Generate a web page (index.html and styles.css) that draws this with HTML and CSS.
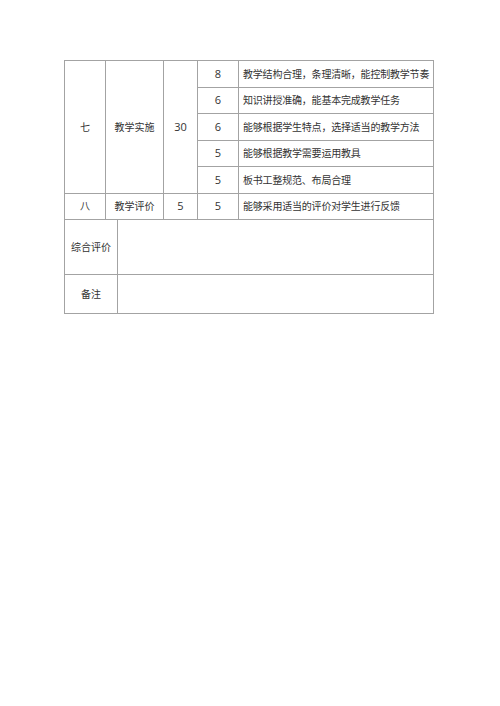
FILE: index.html
```html
<!DOCTYPE html>
<html lang="zh">
<head>
<meta charset="utf-8">
<link rel="stylesheet" href="styles.css">
</head>
<body>
<table class="grid">
  <colgroup>
    <col class="c1"><col class="c2"><col class="c3"><col class="c4"><col class="c5"><col class="c6">
  </colgroup>
  <tr class="r">
    <td rowspan="5" class="ctr">七</td>
    <td rowspan="5" colspan="2" class="ctr">教学实施</td>
    <td rowspan="5" class="ctr num">30</td>
    <td class="ctr num">8</td>
    <td class="desc">教学结构合理，条理清晰，能控制教学节奏</td>
  </tr>
  <tr class="r"><td class="ctr num">6</td><td class="desc">知识讲授准确，能基本完成教学任务</td></tr>
  <tr class="r"><td class="ctr num">6</td><td class="desc">能够根据学生特点，选择适当的教学方法</td></tr>
  <tr class="r"><td class="ctr num">5</td><td class="desc">能够根据教学需要运用教具</td></tr>
  <tr class="r"><td class="ctr num">5</td><td class="desc">板书工整规范、布局合理</td></tr>
  <tr class="r">
    <td class="ctr">八</td>
    <td colspan="2" class="ctr">教学评价</td>
    <td class="ctr num">5</td>
    <td class="ctr num">5</td>
    <td class="desc">能够采用适当的评价对学生进行反馈</td>
  </tr>
  <tr class="big">
    <td colspan="2" class="ctr">综合评价</td>
    <td colspan="4"></td>
  </tr>
  <tr class="mid">
    <td colspan="2" class="ctr">备注</td>
    <td colspan="4"></td>
  </tr>
</table>
</body>
</html>
```
FILE: styles.css
```css
html, body {
  margin: 0;
  padding: 0;
  background: #fff;
}
body {
  padding: 60px 0 0 64px;
  font-family: "Noto Sans CJK SC", "Open Sans", sans-serif;
  color: #333;
  font-size: 10px;
}
.grid {
  border-collapse: collapse;
  table-layout: fixed;
  width: 370px;
}
.grid td {
  border: 1px solid #a3a3a3;
  padding: 0;
  line-height: 14px;
  white-space: nowrap;
  overflow: hidden;
}
.c1 { width: 41px; }
.c2 { width: 12px; }
.c3 { width: 46px; }
.c4 { width: 34px; }
.c5 { width: 41px; }
.c6 { width: 195px; }
.r td { height: 25.5px; }
.big td { height: 54px; }
.mid td { height: 38px; }
.ctr { text-align: center; }
.num { font-family: "Open Sans", sans-serif; font-size: 11px; }
.desc { padding-left: 4px !important; letter-spacing: -0.2px; }
```
